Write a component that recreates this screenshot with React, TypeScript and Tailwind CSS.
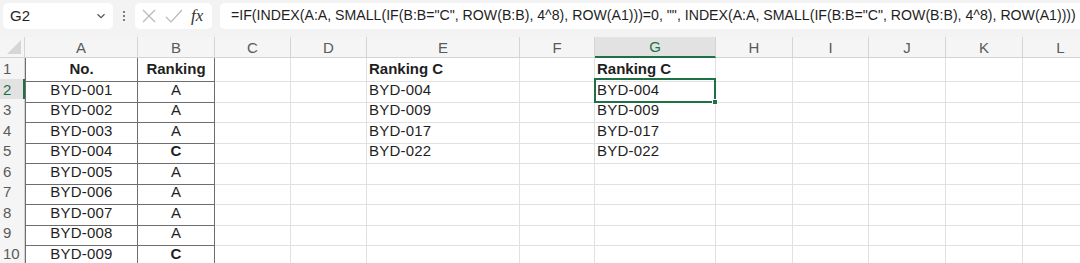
import React from 'react';

const COLS = [
  { key: 'A', w: 113 },
  { key: 'B', w: 77 },
  { key: 'C', w: 76 },
  { key: 'D', w: 76 },
  { key: 'E', w: 153 },
  { key: 'F', w: 75 },
  { key: 'G', w: 121 },
  { key: 'H', w: 77 },
  { key: 'I', w: 76 },
  { key: 'J', w: 77 },
  { key: 'K', w: 77 },
  { key: 'L', w: 76 },
];

const gridTemplate = { gridTemplateColumns: `25px ${COLS.map((c) => c.w + 'px').join(' ')}` };

const tableRows: [string, string][] = [
  ['BYD-001', 'A'],
  ['BYD-002', 'A'],
  ['BYD-003', 'A'],
  ['BYD-004', 'C'],
  ['BYD-005', 'A'],
  ['BYD-006', 'A'],
  ['BYD-007', 'A'],
  ['BYD-008', 'A'],
  ['BYD-009', 'C'],
];

const results = ['BYD-004', 'BYD-009', 'BYD-017', 'BYD-022'];

const FORMULA =
  '=IF(INDEX(A:A, SMALL(IF(B:B="C", ROW(B:B), 4^8), ROW(A1)))=0, "", INDEX(A:A, SMALL(IF(B:B="C", ROW(B:B), 4^8), ROW(A1))))';

function Toolbar() {
  return (
    <div className="flex h-[37px] items-start gap-2 bg-[#f3f3f3] pt-[3px] pl-[3px]">
      {/* Name box */}
      <div className="flex h-[26px] w-[110px] items-center justify-between rounded-[5px] bg-white pl-[7px] pr-[5px]">
        <span className="text-[15px] text-[#1f1f1f]">G2</span>
        <svg width="14" height="14" viewBox="0 0 16 16" fill="none" stroke="#555" strokeWidth="1.4">
          <path d="M4 6l4 4 4-4" />
        </svg>
      </div>
      {/* Dots */}
      <div className="flex h-[26px] w-[6px] flex-col items-center justify-center gap-[2px]">
        <span className="h-[2px] w-[2px] rounded-full bg-[#555]" />
        <span className="h-[2px] w-[2px] rounded-full bg-[#555]" />
        <span className="h-[2px] w-[2px] rounded-full bg-[#555]" />
      </div>
      {/* Cancel / Enter / fx */}
      <div className="flex h-[26px] w-[77px] items-center gap-[8px] rounded-[5px] bg-white pl-[6px]">
        <svg width="16" height="16" viewBox="0 0 16 16" fill="none" stroke="#b8b8b8" strokeWidth="1.2">
          <path d="M2 2l12 12M14 2L2 14" />
        </svg>
        <svg width="18" height="16" viewBox="0 0 18 16" fill="none" stroke="#b8b8b8" strokeWidth="1.2">
          <path d="M1 9l5 5L17 2" />
        </svg>
        <span className="text-[17px] italic text-[#333]" style={{ fontFamily: '"Liberation Serif", serif' }}>
          fx
        </span>
      </div>
      {/* Formula */}
      <div className="flex h-[26px] flex-1 items-center overflow-hidden whitespace-nowrap rounded-l-[5px] bg-white pl-[11px] text-[14.15px] text-[#1f1f1f]">
        {FORMULA}
      </div>
    </div>
  );
}

function ColumnHeader() {
  return (
    <div className="grid h-[21px] bg-[#f5f5f5]" style={gridTemplate}>
      <div className="relative border-b border-r border-[#d4d4d4]">
        <svg className="absolute bottom-[3px] right-[3px]" width="14" height="14" viewBox="0 0 14 14">
          <path d="M14 0L14 14L0 14Z" fill="#d6d6d6" />
        </svg>
      </div>
      {COLS.map((c) =>
        c.key === 'G' ? (
          <div
            key={c.key}
            className="flex items-center justify-center border-b-2 border-r border-b-[#1e7145] border-r-[#d4d4d4] bg-[#e2e2e2] text-[15px] leading-none text-[#1e7145]"
          >
            {c.key}
          </div>
        ) : (
          <div
            key={c.key}
            className="flex items-center justify-center border-b border-r border-[#d4d4d4] text-[15px] leading-none text-[#5a5a5a]"
          >
            {c.key}
          </div>
        ),
      )}
    </div>
  );
}

function cellClass(col: string) {
  const base = 'flex items-center overflow-visible whitespace-nowrap text-[15px] tracking-[0.2px] text-[#1f1f1f]';
  if (col === 'A') return `${base} justify-center border-l border-r border-b border-[#6e6e6e]`;
  if (col === 'B') return `${base} justify-center border-r border-b border-[#6e6e6e]`;
  return `${base} border-r border-b border-[#e1e1e1]`;
}

function cellContent(col: string, row: number): React.ReactNode {
  if (row === 1) {
    if (col === 'A') return <span className="font-bold tracking-normal">No.</span>;
    if (col === 'B') return <span className="font-bold tracking-normal">Ranking</span>;
    if (col === 'E' || col === 'G') return <span className="pl-[2px] font-bold tracking-normal">Ranking C</span>;
    return null;
  }
  const t = tableRows[row - 2];
  if (col === 'A') return t[0];
  if (col === 'B') return <span className={t[1] === 'C' ? 'font-bold' : ''}>{t[1]}</span>;
  if ((col === 'E' || col === 'G') && row - 2 < results.length)
    return <span className="pl-[2px]">{results[row - 2]}</span>;
  return null;
}

function Rows() {
  const rows = Array.from({ length: 10 }, (_, i) => i + 1);
  return (
    <div>
      {rows.map((r) => (
        <div key={r} className="grid" style={{ ...gridTemplate, height: r % 2 === 1 ? 21 : 20 }}>
          <div
            className={`flex items-center border-b border-[#e1e1e1] pl-[3px] text-[15px] ${
              r === 2 ? 'border-r-2 border-r-[#1e7145] bg-[#e2e2e2] text-[#1e7145]' : 'border-r border-r-[#d4d4d4] bg-[#f5f5f5] text-[#5a5a5a]'
            }`}
          >
            {r}
          </div>
          {COLS.map((c) =>
            c.key === 'G' && r === 2 ? (
              <div key={c.key} className="relative border-r border-b border-[#e1e1e1]">
                <div className="absolute -left-px -top-px bottom-[-1px] right-[-1px] flex items-center border-2 border-[#1e7145] text-[15px] tracking-[0.2px] text-[#1f1f1f]">
                  <span className="pl-[1px]">{results[0]}</span>
                </div>
                <span className="absolute bottom-[-3px] right-[-3px] h-[6px] w-[6px] border border-white bg-[#1e7145]" />
              </div>
            ) : (
              <div key={c.key} className={cellClass(c.key)}>
                {cellContent(c.key, r)}
              </div>
            ),
          )}
        </div>
      ))}
    </div>
  );
}

export default function App() {
  return (
    <div
      className="h-[263px] w-[1080px] overflow-hidden bg-white"
      style={{ fontFamily: '"Liberation Sans", Arial, sans-serif' }}
    >
      <Toolbar />
      <ColumnHeader />
      <Rows />
    </div>
  );
}
